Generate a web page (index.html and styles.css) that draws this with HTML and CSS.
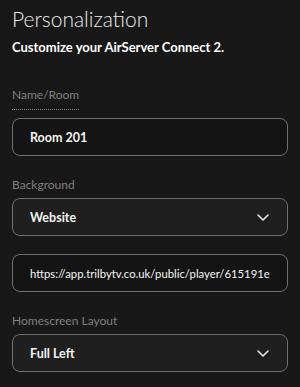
FILE: index.html
```html
<!DOCTYPE html>
<html lang="en">

<head>
    <meta charset="UTF-8">
    <meta name="viewport" content="width=device-width, initial-scale=1.0">
    <title>Personalization</title>
    <link rel="stylesheet" href="styles.css">
</head>

<body>
    <div class="panel">
        <h1 class="title">Personalization</h1>
        <p class="subtitle">Customize your AirServer Connect 2.</p>

        <div class="form-group first">
            <label class="label dotted">Name/Room</label>
            <div class="field">
                <span class="value">Room 201</span>
            </div>
        </div>

        <div class="form-group">
            <label class="label">Background</label>
            <div class="field select">
                <span class="value">Website</span>
                <svg class="chevron" width="12" height="7" viewBox="0 0 12 7">
                    <polyline points="1,1 6,6 11,1" fill="none" stroke="#e6e6e6" stroke-width="1.6" stroke-linecap="round" stroke-linejoin="round" />
                </svg>
            </div>
            <div class="field url">
                <span class="value">https://app.trilbytv.co.uk/public/player/615191e8</span>
            </div>
        </div>

        <div class="form-group">
            <label class="label">Homescreen Layout</label>
            <div class="field select">
                <span class="value">Full Left</span>
                <svg class="chevron" width="12" height="7" viewBox="0 0 12 7">
                    <polyline points="1,1 6,6 11,1" fill="none" stroke="#e6e6e6" stroke-width="1.6" stroke-linecap="round" stroke-linejoin="round" />
                </svg>
            </div>
        </div>
    </div>
</body>

</html>
```

FILE: styles.css
```css
/* Global Reset */
* {
    box-sizing: border-box;
    margin: 0;
    padding: 0;
}

body {
    font-family: "Lato", "Open Sans", sans-serif;
    background-color: #181818;
    color: #f2f2f2;
}

.panel {
    padding: 7px 12px 0;
}

.title {
    font-size: 21px;
    line-height: 24px;
    font-weight: 300;
    color: #ececec;
}

.subtitle {
    margin-top: 8px;
    font-size: 13px;
    line-height: 16px;
    font-weight: 700;
    color: #ffffff;
}

.form-group {
    margin-top: 21px;
}

.form-group.first {
    margin-top: 32px;
}

.label {
    display: block;
    width: fit-content;
    font-size: 12px;
    line-height: 16px;
    color: #808080;
    margin-bottom: 5px;
}

.label.dotted {
    border-bottom: 1px dotted #8a8a8a;
    padding-bottom: 6px;
    margin-bottom: 8px;
}

.field {
    display: flex;
    align-items: center;
    height: 38px;
    padding: 0 17px;
    border: 1px solid #707070;
    border-radius: 8px;
    background-color: #141414;
    font-size: 12.5px;
    font-weight: 700;
    color: #f4f4f4;
}

.field.select {
    background-color: #1f1f1f;
    justify-content: space-between;
}

.field.url {
    margin-top: 18px;
    font-size: 11.3px;
    font-weight: 400;
}

.value {
    min-width: 0;
    white-space: nowrap;
    overflow: hidden;
}

.chevron {
    flex-shrink: 0;
    margin-right: 1px;
}
```
